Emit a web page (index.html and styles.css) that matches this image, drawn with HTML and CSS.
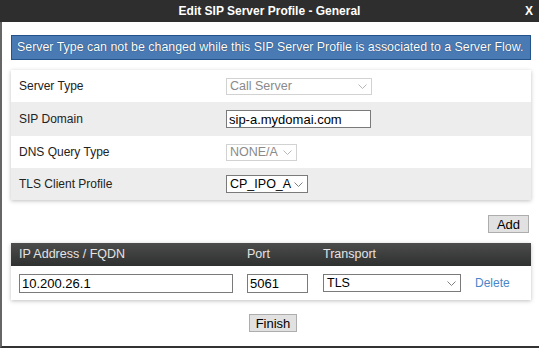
FILE: index.html
```html
<!DOCTYPE html>
<html lang="en">
<head>
    <meta charset="UTF-8">
    <title>Edit SIP Server Profile - General</title>
    <link rel="stylesheet" href="styles.css">
</head>
<body>
    <div class="titlebar">
        <span></span>
        <span class="title">Edit SIP Server Profile - General</span>
        <span class="close">X</span>
    </div>
    <div class="content">
        <div class="notice">Server Type can not be changed while this SIP Server Profile is associated to a Server Flow.</div>

        <div class="panel general">
            <div class="row">
                <label>Server Type</label>
                <div class="select disabled w-type"><span>Call Server</span><svg width="9" height="5" viewBox="0 0 9 5"><path d="M0.5 0.5 L4.5 4.5 L8.5 0.5" fill="none" stroke="#b8b8b8"/></svg></div>
            </div>
            <div class="row alt tall">
                <label>SIP Domain</label>
                <input class="text w-domain" type="text" value="sip-a.mydomai.com">
            </div>
            <div class="row">
                <label>DNS Query Type</label>
                <div class="select disabled w-dns"><span>NONE/A</span><svg width="9" height="5" viewBox="0 0 9 5"><path d="M0.5 0.5 L4.5 4.5 L8.5 0.5" fill="none" stroke="#b8b8b8"/></svg></div>
            </div>
            <div class="row alt">
                <label>TLS Client Profile</label>
                <div class="select w-tls"><span>CP_IPO_A</span><svg width="9" height="5" viewBox="0 0 9 5"><path d="M0.5 0.5 L4.5 4.5 L8.5 0.5" fill="none" stroke="#808080"/></svg></div>
            </div>
        </div>

        <div class="actions">
            <button class="btn btn-add">Add</button>
        </div>

        <div class="panel table">
            <div class="thead">
                <span>IP Address / FQDN</span>
                <span>Port</span>
                <span>Transport</span>
            </div>
            <div class="trow">
                <input class="text w-ip" type="text" value="10.200.26.1">
                <input class="text w-port" type="text" value="5061">
                <div class="select w-transport"><span>TLS</span><svg width="9" height="5" viewBox="0 0 9 5"><path d="M0.5 0.5 L4.5 4.5 L8.5 0.5" fill="none" stroke="#808080"/></svg></div>
                <a class="delete" href="#">Delete</a>
            </div>
        </div>

        <div class="footer">
            <button class="btn btn-finish">Finish</button>
        </div>
    </div>
</body>
</html>
```

FILE: styles.css
```css
body {
    margin: 0;
    background-color: #ffffff;
    font-family: "Liberation Sans", Arial, sans-serif;
    font-size: 12px;
    color: #222;
}
.titlebar {
    display: grid;
    grid-template-columns: 1fr auto 1fr;
    height: 22px;
    line-height: 22px;
    background-color: #2e2e2e;
    color: #fff;
    font-weight: bold;
}
.close {
    justify-self: end;
    padding-right: 6px;
}
.content {
    border-left: 2px solid #666;
    border-bottom: 2px solid #333;
    padding: 13px 8px 14px 9px;
}
.notice {
    height: 23px;
    line-height: 23px;
    padding-left: 5px;
    background-color: #4a7ab4;
    border: 1px solid #24538a;
    color: #fff;
    font-size: 12.4px;
    text-shadow: 0 0 1px #0b2a4d;
}
.panel {
    background-color: #fff;
    box-shadow: 0 1px 4px rgba(0,0,0,0.25);
}
.general {
    margin-top: 10px;
}
.row {
    display: grid;
    grid-template-columns: 207px 1fr;
    align-items: center;
    height: 32px;
    padding: 0 8px;
}
.row.tall {
    height: 34px;
}
.row.alt {
    background-color: #ededed;
}
label {
    color: #222;
}
.text {
    box-sizing: border-box;
    height: 19px;
    margin: 0;
    padding: 0 2px;
    border: 1px solid #7a7a7a;
    font-family: "Liberation Sans", Arial, sans-serif;
    font-size: 13px;
    color: #000;
    background: #fff;
}
.select {
    box-sizing: border-box;
    display: flex;
    justify-content: space-between;
    align-items: center;
    height: 18px;
    padding: 0 4px 0 3px;
    border: 1px solid #7a7a7a;
    background: #fff;
    color: #000;
    font-size: 12.5px;
}
.select.disabled {
    border-color: #d2d2d2;
    color: #8a8a8a;
}
.w-type { width: 146px; height: 17px; }
.w-domain { width: 145px; height: 18px; }
.w-dns { width: 71px; height: 17px; }
.w-tls { width: 82px; }
.w-ip { width: 214px; }
.w-port { width: 61px; }
.w-transport { width: 138px; height: 18px; }
.actions {
    display: flex;
    justify-content: flex-end;
    padding: 15px 2px 0 0;
}
.btn {
    box-sizing: border-box;
    margin: 0;
    padding: 0;
    height: 18px;
    border: 1px solid #adadad;
    background-color: #e1e1e1;
    font-family: "Liberation Sans", Arial, sans-serif;
    font-size: 13px;
    color: #000;
}
.btn-add {
    width: 41px;
}
.btn-finish {
    width: 48px;
}
.table {
    margin-top: 10px;
}
.thead {
    display: grid;
    grid-template-columns: 228px 76px 1fr;
    height: 23px;
    line-height: 23px;
    padding-left: 8px;
    background: linear-gradient(#4c4c4c, #2f3030);
    color: #e4e4e4;
    font-size: 12.5px;
}
.trow {
    display: flex;
    align-items: center;
    height: 34px;
    padding-left: 8px;
}
.w-ip { margin-right: 14px; }
.w-port { margin-right: 15px; }
.w-transport { margin-right: 14px; }
.delete {
    color: #4a86c8;
    text-decoration: none;
}
.footer {
    display: flex;
    justify-content: center;
    padding-top: 14px;
    padding-left: 4px;
}
```
